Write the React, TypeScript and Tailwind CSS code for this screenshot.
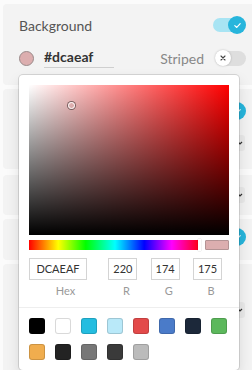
import React from 'react';

const swatches: string[] = [
  '#000000', '#ffffff', '#24bde0', '#b9e9f9', '#e34a4a', '#4a7bc9', '#1c283a', '#5cb85c',
  '#f0ad4e', '#232323', '#777777', '#3a3a3a', '#bbbbbb',
];

function ToggleOn() {
  return (
    <div className="relative w-[33px] h-[18px] flex items-center">
      <div className="w-[31px] h-[14px] rounded-full bg-[#a8e4f3]" />
      <div className="absolute right-0 top-0 w-[18px] h-[18px] rounded-full bg-[#27b5dc] flex items-center justify-center">
        <svg width="9" height="9" viewBox="0 0 10 10" fill="none">
          <path d="M2 5.2 L4.2 7.2 L8 3" stroke="#fff" strokeWidth="1.3" strokeLinecap="round" strokeLinejoin="round" />
        </svg>
      </div>
    </div>
  );
}

function ToggleOff() {
  return (
    <div className="relative w-[31px] h-[17px] flex items-center">
      <div className="w-[31px] h-[15px] rounded-full bg-[#dedede]" />
      <div className="absolute left-0 top-0 w-[16px] h-[16px] rounded-full bg-white shadow-[0_0_2px_rgba(0,0,0,0.25)] flex items-center justify-center">
        <svg width="8" height="8" viewBox="0 0 8 8" fill="none">
          <path d="M2 2 L6 6 M6 2 L2 6" stroke="#444" strokeWidth="1.1" strokeLinecap="round" />
        </svg>
      </div>
    </div>
  );
}

function SelectBox() {
  return (
    <div className="w-[60px] h-[16px] rounded-[3px] bg-[#e9e9e9] flex items-center justify-end pr-[2px]">
      <svg width="6" height="6" viewBox="0 0 6 6" fill="none">
        <path d="M1 2 L3 4 L5 2" stroke="#333" strokeWidth="1.2" />
      </svg>
    </div>
  );
}

function Field({ value, label, wide }: { value: string; label: string; wide?: boolean }) {
  return (
    <div className={`flex flex-col items-start ${wide ? 'w-[73px]' : 'w-[36px]'}`}>
      <div
        className={`${wide ? 'w-[58px]' : 'w-[29px]'} h-[22px] border border-[#d4d4d4] flex items-center justify-center text-[11px] text-[#333]`}
      >
        {value}
      </div>
      <div className="w-full text-center text-[11px] text-[#999] mt-[4px] leading-[14px]">{label}</div>
    </div>
  );
}

export default function App() {
  return (
    <div className="relative w-[252px] h-[370px] overflow-hidden bg-[#fbfbfb] font-['Lato','Noto_Sans',sans-serif]">
      <div className="flex flex-col pt-[4px] pl-[3px]">
        <div className="w-[260px] h-[81px] rounded-[4px] bg-[#f3f3f3] pl-[16px] pt-[12px]">
          <div className="w-[227px] h-[18px] flex items-center justify-between">
            <span className="text-[14px] text-[#555]">Background</span>
            <ToggleOn />
          </div>
          <div className="w-[227px] h-[18px] mt-[15px] flex items-center">
            <div className="w-[15px] h-[15px] rounded-full bg-[#dcaeaf] border border-[#9a8a8a]" />
            <div className="ml-[10px] w-[70px] border-b border-[#cfcfcf] pb-[1px] text-[14px] font-bold text-[#333] leading-[18px]">
              #dcaeaf
            </div>
            <span className="ml-auto mr-[11px] text-[14px] text-[#888]">Striped</span>
            <ToggleOff />
          </div>
        </div>

        <div className="w-[260px] h-[80px] mt-[4px] rounded-[4px] bg-[#f3f3f3] pl-[16px] pt-[13px]">
          <div className="w-[227px] h-[18px] flex items-center justify-end">
            <ToggleOn />
          </div>
          <div className="w-[226px] h-[16px] mt-[15px] flex items-center justify-end">
            <SelectBox />
          </div>
        </div>

        <div className="w-[260px] h-[40px] mt-[6px] rounded-[4px] bg-[#f3f3f3] pl-[16px] flex items-center">
          <div className="w-[226px] flex justify-end">
            <SelectBox />
          </div>
        </div>

        <div className="w-[260px] h-[41px] mt-[4px] rounded-[4px] bg-[#f3f3f3] pl-[16px] pt-[9px]">
          <div className="w-[227px] flex justify-end">
            <ToggleOn />
          </div>
        </div>

        <div className="w-[260px] h-[120px] mt-[4px] rounded-[4px] bg-[#f3f3f3] pl-[16px] pt-[38px]">
          <div className="w-[226px] flex justify-end">
            <SelectBox />
          </div>
        </div>
      </div>

      <div className="absolute left-[19px] top-[75px] w-[220px] rounded-[4px] bg-white shadow-[0_0_0_1px_rgba(0,0,0,0.12),0_6px_14px_rgba(0,0,0,0.12)]">
        <div className="p-[10px] pb-0">
          <div className="relative w-[200px] h-[150px] bg-[#ff0000]">
            <div className="absolute inset-0 bg-[linear-gradient(to_right,#fff,rgba(255,255,255,0))]" />
            <div className="absolute inset-0 bg-[linear-gradient(to_top,#000,rgba(0,0,0,0))]" />
            <div className="absolute left-[39px] top-[17px] w-[7px] h-[7px] rounded-full border-[1.5px] border-white shadow-[0_0_0_1px_rgba(0,0,0,0.45)]" />
          </div>
          <div className="flex items-center mt-[5px] gap-[4px]">
            <div className="relative w-[172px] h-[10px] bg-[linear-gradient(to_right,#f00_0%,#ff0_17%,#0f0_33%,#0ff_50%,#00f_67%,#f0f_83%,#f00_100%)]">
              <div className="absolute right-0 top-[-1px] w-[3px] h-[12px] bg-white shadow-[0_0_1px_rgba(0,0,0,0.5)]" />
            </div>
            <div className="w-[24px] h-[10px] bg-[#dcaeaf] border border-[#b39394] rounded-[1px]" />
          </div>
          <div className="flex justify-between w-[200px] mt-[8px]">
            <Field value="DCAEAF" label="Hex" wide />
            <Field value="220" label="R" />
            <Field value="174" label="G" />
            <Field value="175" label="B" />
          </div>
        </div>
        <div className="mt-[9px] border-t border-[#eeeeee] px-[10px] pt-[10px] pb-[10px]">
          <div className="grid grid-cols-[repeat(8,16px)] gap-[10px]">
            {swatches.map((c) => (
              <div
                key={c}
                className="w-[16px] h-[16px] rounded-[3px] shadow-[inset_0_0_0_1px_rgba(0,0,0,0.15)]"
                style={{ backgroundColor: c }}
              />
            ))}
          </div>
        </div>
      </div>
    </div>
  );
}
